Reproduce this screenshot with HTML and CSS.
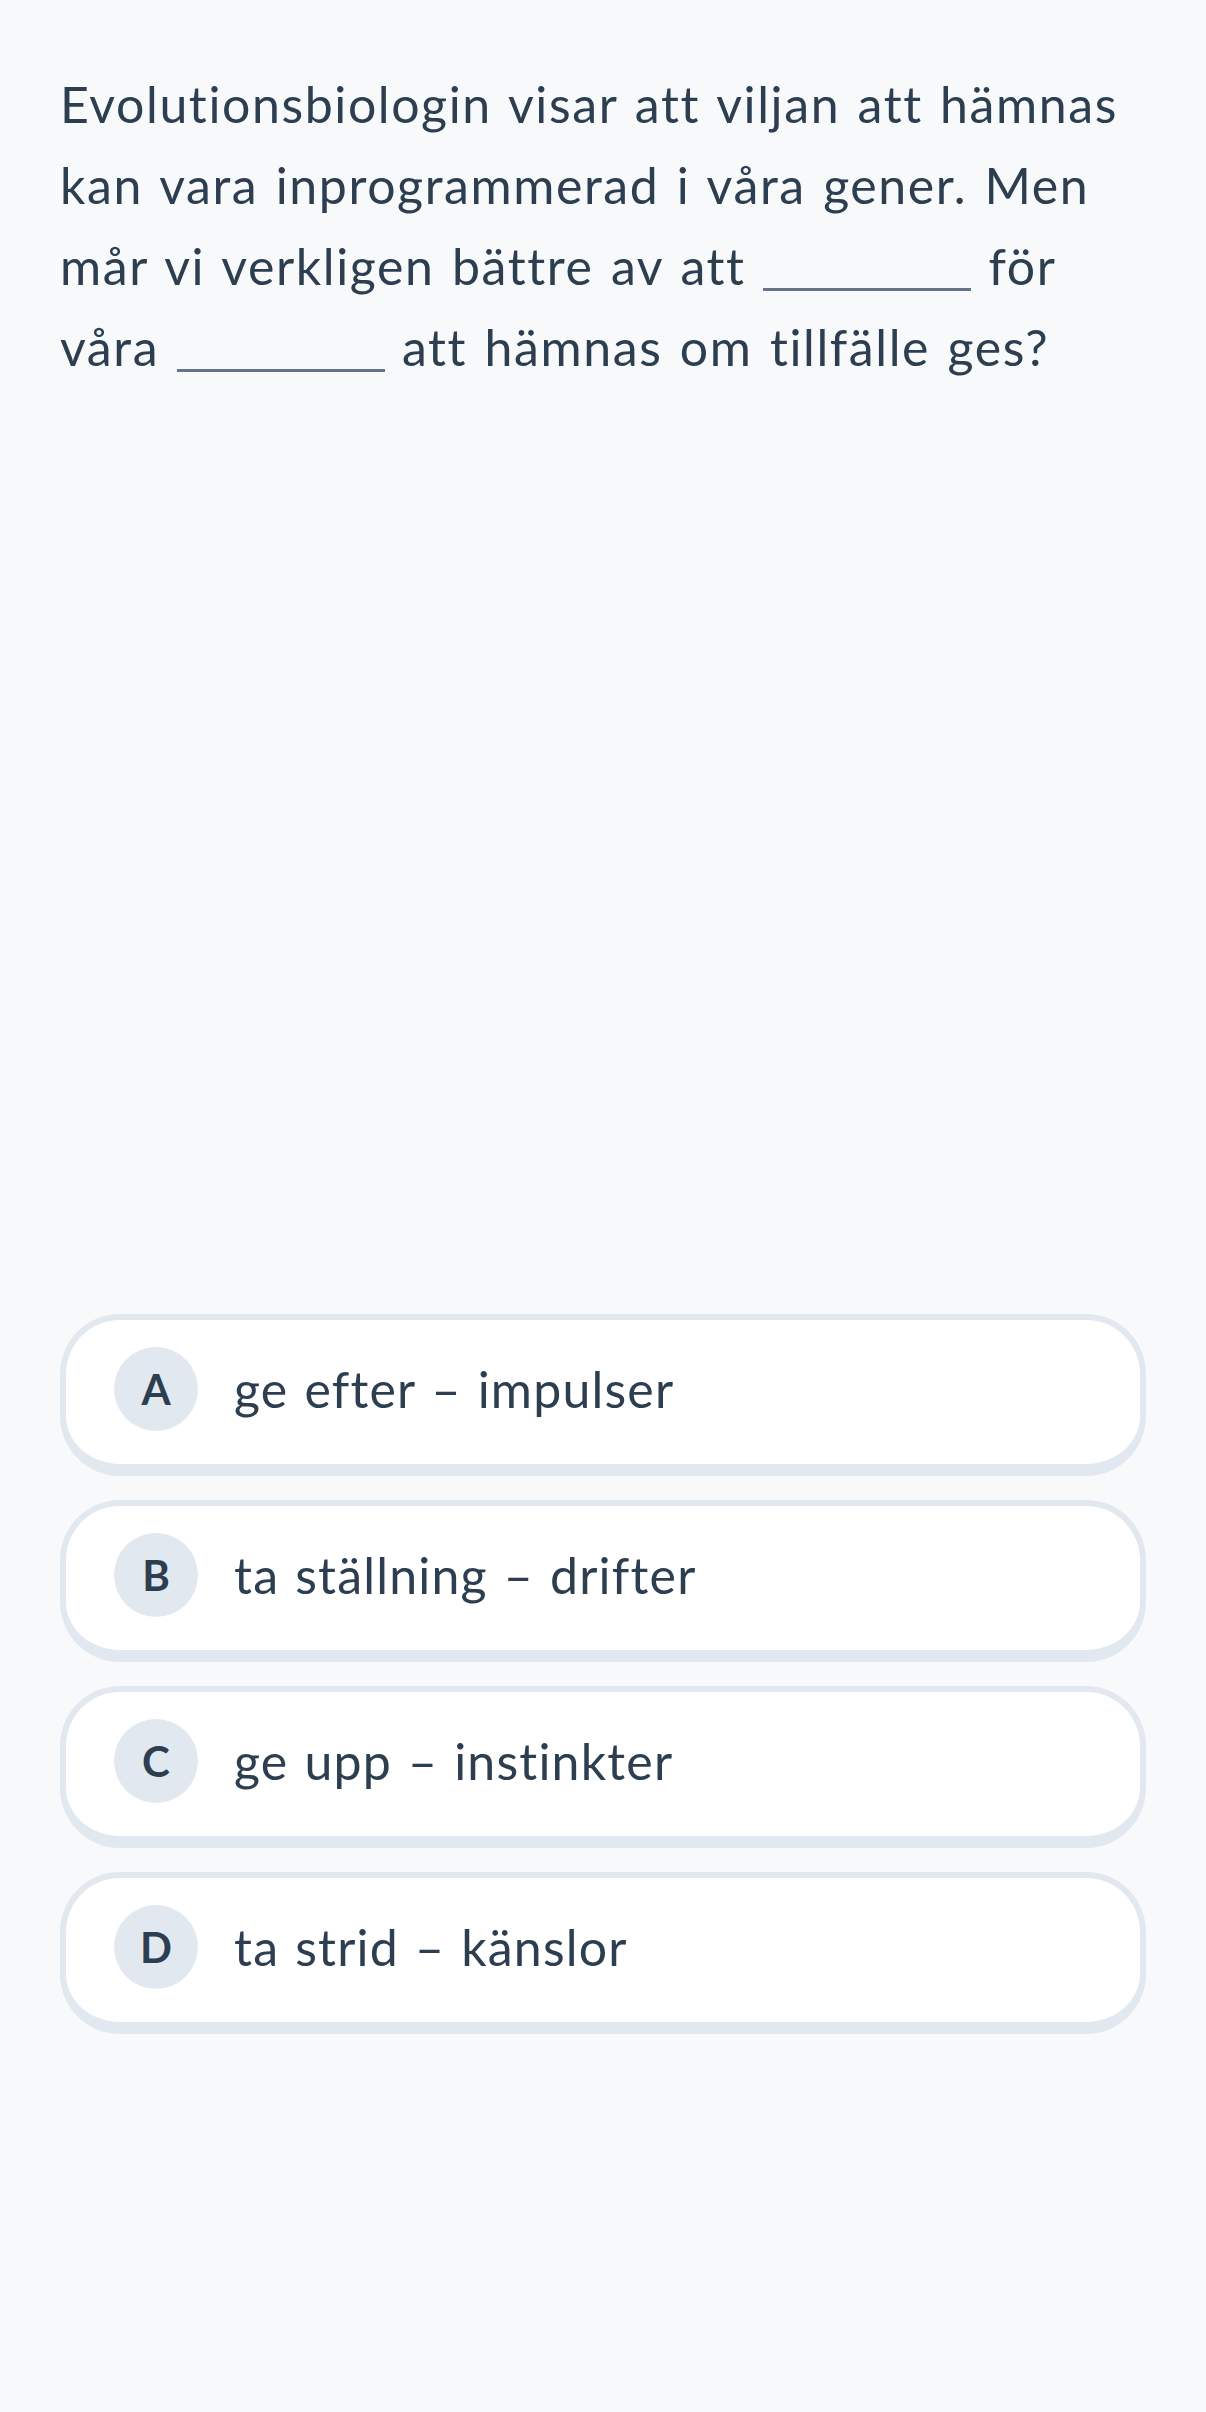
FILE: index.html
```html
<!doctype html>
<html lang="sv">
<head>
<meta charset="utf-8">
<title>Fråga</title>
<meta name="viewport" content="width=device-width, initial-scale=1">
<link rel="stylesheet" href="styles.css">
</head>
<body>
<div class="quiz">
	<p class="question">Evolutionsbiologin visar att viljan att hämnas kan vara inprogrammerad i våra gener. Men mår vi verkligen bättre av att <span class="blank"></span> för våra <span class="blank"></span> att hämnas om tillfälle ges?</p>

	<div class="options">
		<button class="option" type="button"><span class="letter">A</span><span class="label">ge efter – impulser</span></button>
		<button class="option" type="button"><span class="letter">B</span><span class="label">ta ställning – drifter</span></button>
		<button class="option" type="button"><span class="letter">C</span><span class="label">ge upp – instinkter</span></button>
		<button class="option" type="button"><span class="letter">D</span><span class="label">ta strid – känslor</span></button>
	</div>
</div>
</body>
</html>
```

FILE: styles.css
```css
body {
	margin: 0;
	background-color: #f7f9fb;
	color: #2c3e50;
	font-family: Lato, "Open Sans", sans-serif;
	font-variant-ligatures: none;
}

.quiz {
	padding: 64px 60px 0 60px;
}

.question {
	margin: 0;
	font-size: 50px;
	line-height: 81px;
	letter-spacing: 1.6px;
	word-spacing: 3px;
}

.blank {
	display: inline-block;
	width: 208px;
	height: 3px;
	background-color: #64748b;
	vertical-align: -6px;
}

.options {
	display: flex;
	flex-direction: column;
	gap: 24px;
	margin-top: 926px;
}

.option {
	display: flex;
	align-items: center;
	gap: 36px;
	height: 162px;
	box-sizing: border-box;
	padding: 0 0 6px 48px;
	background-color: #fff;
	border: 6px solid #e2e8f0;
	border-bottom-width: 12px;
	border-radius: 60px;
	font-family: inherit;
	color: inherit;
	text-align: left;
	cursor: pointer;
}

.letter {
	display: flex;
	align-items: center;
	justify-content: center;
	width: 84px;
	height: 84px;
	border-radius: 50%;
	background-color: #e2e8f0;
	font-size: 42px;
	font-weight: 700;
}

.label {
	font-size: 50px;
	letter-spacing: 1.2px;
	word-spacing: 2px;
}
```
